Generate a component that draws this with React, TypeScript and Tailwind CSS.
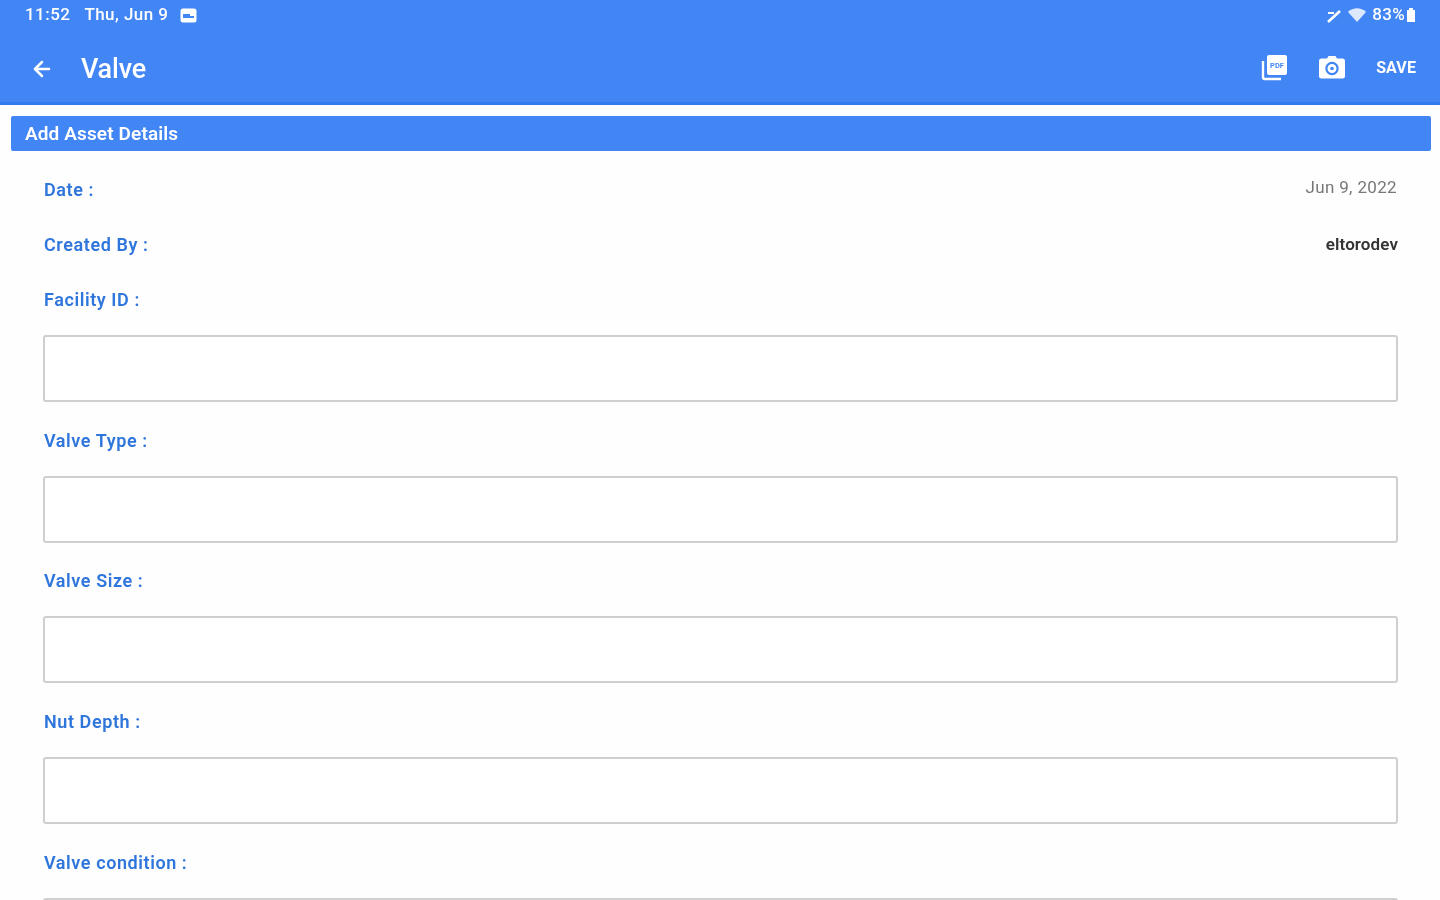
import React from 'react';
import { ArrowLeft } from 'lucide-react';

const fields = ['Valve Type :', 'Valve Size :', 'Nut Depth :'];

function FieldBox() {
  return <div className="h-[67px] shrink-0 rounded-[3px] border-2 border-[#cfcfcf] bg-white" />;
}

function Label({ children }: { children: React.ReactNode }) {
  return (
    <div className="h-[20px] pl-px text-[18px] leading-[21px] font-semibold tracking-[0.58px] text-[#2f76dc]">
      {children}
    </div>
  );
}

function PdfStackIcon() {
  return (
    <svg width="27" height="27" viewBox="0 0 27 27">
      <path d="M2 7v16a2 2 0 0 0 2 2h16" fill="none" stroke="white" strokeWidth="2.4" />
      <rect x="6" y="1" width="20" height="20" rx="2" fill="white" />
      <text x="16" y="13.5" textAnchor="middle" fontSize="7.5" fontWeight="700" fill="#4285f4" fontFamily="Roboto, sans-serif">
        PDF
      </text>
    </svg>
  );
}

function CameraIcon() {
  return (
    <svg width="26" height="24" viewBox="0 0 26 24">
      <path d="M8 3.5 9.5 1h7L18 3.5h5.5A2.5 2.5 0 0 1 26 6v15a2.5 2.5 0 0 1-2.5 2.5h-21A2.5 2.5 0 0 1 0 21V6a2.5 2.5 0 0 1 2.5-2.5z" fill="white" />
      <circle cx="13" cy="13.5" r="5.6" fill="none" stroke="#4285f4" strokeWidth="2.2" />
      <circle cx="13" cy="13.5" r="1.8" fill="#4285f4" />
    </svg>
  );
}

export default function App() {
  return (
    <div className="h-[900px] w-[1440px] overflow-hidden bg-[#fefefe] font-['Roboto',sans-serif]">
      {/* App bar */}
      <header className="h-[105px] border-b-[3px] border-[#2f7cf0] bg-[#4285f4] text-white">
        <div className="flex h-[30px] items-center justify-between pr-[24px] pl-[25px] text-white">
          <div className="flex items-center text-[17px] font-medium tracking-[0.45px] blur-[0.6px]">
            <span>11:52</span>
            <span className="ml-[14px]">Thu, Jun 9</span>
            <svg className="ml-[12px]" width="17" height="15" viewBox="0 0 17 15">
              <rect x="0.5" y="0.5" width="16" height="14" rx="2.5" fill="#ffffff" />
              <path d="M3 6h7v2h4v2H3z" fill="#4285f4" />
            </svg>
          </div>
          <div className="flex items-center text-[17px] tracking-[0.3px] blur-[0.7px]">
            <svg width="16" height="15" viewBox="0 0 16 15" fill="none" stroke="#ffffff" strokeWidth="2.6">
              <path d="M2 14 14 3" />
              <path d="M2 5h6" strokeWidth="2" />
            </svg>
            <svg className="ml-[6px]" width="18" height="14" viewBox="0 0 18 14" fill="#dbe8fd">
              <path d="M0 4C5-1 13-1 18 4l-9 10z" />
            </svg>
            <span className="ml-[6px] font-medium">83%</span>
            <svg className="ml-[1px]" width="10" height="14" viewBox="0 0 10 14" fill="#ffffff">
              <path d="M3 0h4v2h2v12H1V2h2z" />
            </svg>
          </div>
        </div>
        <div className="flex h-[72px] items-center justify-between pt-[2px] pr-[24px] pl-[30px]">
          <div className="flex items-center pt-[4px] font-medium blur-[0.6px]">
            <ArrowLeft size={24} strokeWidth={2.5} />
            <span className="ml-[27px] text-[27px] tracking-[-0.2px]">Valve</span>
          </div>
          <div className="flex items-center blur-[0.6px]">
            <PdfStackIcon />
            <div className="ml-[31px]">
              <CameraIcon />
            </div>
            <span className="ml-[31px] pt-[2px] text-[16px] font-bold tracking-[0.1px]">SAVE</span>
          </div>
        </div>
      </header>

      {/* Section title */}
      <div className="mt-[11px] mr-[9px] ml-[11px] flex h-[35px] items-center rounded-[2px] bg-[#4285f4] pt-[2px] pl-[14px] text-[19px] font-semibold tracking-[0.12px] text-white blur-[0.7px]">
        Add Asset Details
      </div>

      {/* Form */}
      <div className="pt-[28px] pr-[42px] pl-[43px] blur-[0.7px]">
        <div className="flex justify-between pr-[1px]">
          <Label>Date :</Label>
          <span className="text-[17px] leading-[16px] tracking-[0.35px] text-[#777777]">Jun 9, 2022</span>
        </div>
        <div className="mt-[35px] flex justify-between">
          <Label>Created By :</Label>
          <span className="text-[17px] leading-[20px] font-semibold tracking-[0.1px] text-[#333333]">eltorodev</span>
        </div>
        <div className="mt-[35px]">
          <Label>Facility ID :</Label>
        </div>
        <div className="mt-[26px]">
          <FieldBox />
        </div>
        {fields.map((f) => (
          <div key={f} className="mt-[27.67px]">
            <Label>{f}</Label>
            <div className="mt-[26px]">
              <FieldBox />
            </div>
          </div>
        ))}
        <div className="mt-[27.67px]">
          <Label>Valve condition :</Label>
          <div className="mt-[26px]">
            <FieldBox />
          </div>
        </div>
      </div>
    </div>
  );
}
